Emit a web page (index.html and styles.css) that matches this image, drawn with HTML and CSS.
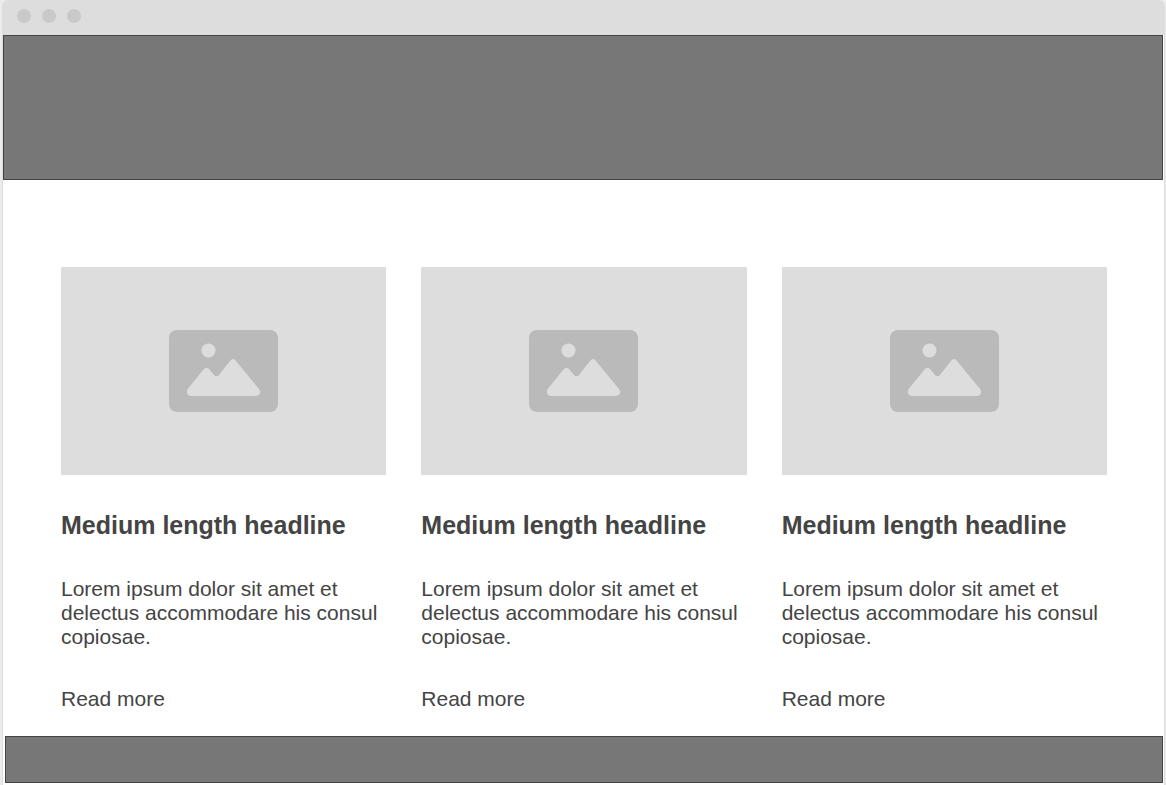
FILE: index.html
```html
<!DOCTYPE html>
<html lang="en">
<head>
<meta charset="utf-8">
<meta name="viewport" content="width=device-width, initial-scale=1">
<title>Article cards</title>
<link rel="stylesheet" href="styles.css">
</head>
<body>
<svg class="sprite" aria-hidden="true">
  <symbol id="picture" viewBox="0 0 109 82">
    <rect width="109" height="82" rx="8" fill="#bababa"/>
    <circle cx="39.500" cy="20.500" r="7" fill="#dddddd"/>
    <path fill="#dddddd" d="M19 58.500 L34.500 39.500 Q37.500 36 40.500 39.500 L45 45 Q47.500 47.500 50 45 L61 31 Q64 27 67 31 L90 59 Q92 62 90.500 64 Q89.500 66 86.500 66 H22 Q19 66 18 63 Q17.500 60.500 19 58.500 Z"/>
  </symbol>
</svg>
<div class="window">
  <div class="titlebar">
    <span class="dot"></span><span class="dot"></span><span class="dot"></span>
  </div>
  <header class="banner"></header>
  <main class="cards">
    <article class="card">
      <div class="thumb"><svg class="icon" aria-hidden="true"><use href="#picture"/></svg></div>
      <h2 class="headline">Medium length headline</h2>
      <p class="summary">Lorem ipsum dolor sit amet et delectus accommodare his consul copiosae.</p>
      <a class="more" href="#">Read more</a>
    </article>
    <article class="card">
      <div class="thumb"><svg class="icon" aria-hidden="true"><use href="#picture"/></svg></div>
      <h2 class="headline">Medium length headline</h2>
      <p class="summary">Lorem ipsum dolor sit amet et delectus accommodare his consul copiosae.</p>
      <a class="more" href="#">Read more</a>
    </article>
    <article class="card">
      <div class="thumb"><svg class="icon" aria-hidden="true"><use href="#picture"/></svg></div>
      <h2 class="headline">Medium length headline</h2>
      <p class="summary">Lorem ipsum dolor sit amet et delectus accommodare his consul copiosae.</p>
      <a class="more" href="#">Read more</a>
    </article>
  </main>
  <footer class="footer"></footer>
</div>
</body>
</html>
```

FILE: styles.css
```css
* {
  box-sizing: border-box;
}

body {
  margin: 0;
  padding: 0 1px 0 2px;
  background: #ececec;
  color: #444444;
  font-family: "Liberation Sans", Arial, sans-serif;
}

.sprite {
  position: absolute;
  width: 0;
  height: 0;
}

.window {
  display: flex;
  flex-direction: column;
  min-height: 100vh;
  padding-bottom: 2px;
  border: solid #dddddd;
  border-width: 0 1px;
  border-radius: 6px 6px 0 0;
  background: #ffffff;
}

.titlebar {
  display: flex;
  gap: 11px;
  height: 35px;
  padding: 9px 14px;
  border-radius: 5px 5px 0 0;
  background: #dddddd;
}

.dot {
  width: 14px;
  height: 14px;
  border-radius: 50%;
  background: #c9c9c9;
}

.banner {
  height: 145px;
  margin-right: 1px;
  border: 1px solid #444444;
  background: #777777;
}

.cards {
  display: grid;
  grid-template-columns: repeat(3, 1fr);
  gap: 35px;
  padding: 87px 57px 25px 58px;
}

.thumb {
  display: flex;
  align-items: center;
  justify-content: center;
  aspect-ratio: 325 / 208;
  background: #dddddd;
}

.icon {
  width: 109px;
  height: 82px;
}

.headline {
  margin: 36px 0 37px;
  font-size: 25px;
  line-height: 29px;
}

.summary {
  margin: 0 0 38px;
  font-size: 21px;
  line-height: 24px;
}

.more {
  display: block;
  color: inherit;
  font-size: 21px;
  line-height: 24px;
  text-decoration: none;
}

.footer {
  flex: 1 0 46px;
  margin: 0 1px 0 2px;
  border: 1px solid #444444;
  background: #777777;
}
```
